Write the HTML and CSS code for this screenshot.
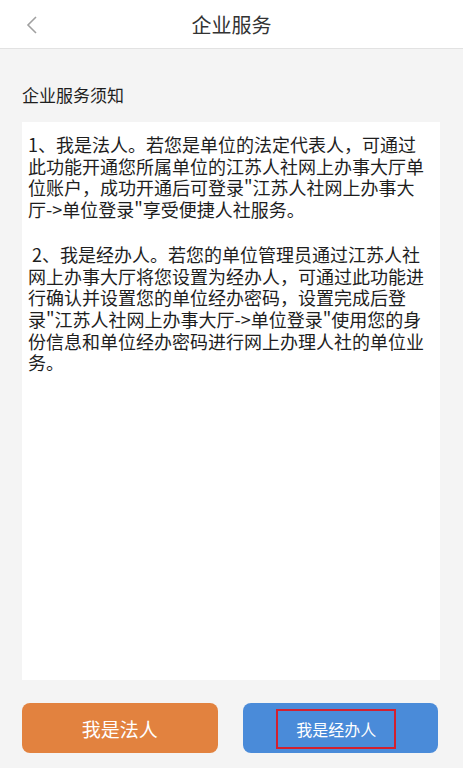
FILE: index.html
```html
<!DOCTYPE html>
<html lang="zh-CN">
<head>
    <meta charset="UTF-8">
    <meta name="viewport" content="width=device-width, initial-scale=1.0">
    <title>企业服务</title>
    <link rel="stylesheet" href="styles.css">
</head>
<body>
    <div class="header">
        <button class="back-btn">
            <svg width="12" height="18" viewBox="0 0 12 18">
                <polyline points="10,1 2,9 10,17" fill="none" stroke="#a0a0a0" stroke-width="1.6"/>
            </svg>
        </button>
        <h1>企业服务</h1>
    </div>

    <div class="section-title">企业服务须知</div>

    <div class="notice">
        <p>1、我是法人。若您是单位的法定代表人，可通过此功能开通您所属单位的江苏人社网上办事大厅单位账户，成功开通后可登录"江苏人社网上办事大厅->单位登录"享受便捷人社服务。</p>
        <p>&nbsp;2、我是经办人。若您的单位管理员通过江苏人社网上办事大厅将您设置为经办人，可通过此功能进行确认并设置您的单位经办密码，设置完成后登录"江苏人社网上办事大厅->单位登录"使用您的身份信息和单位经办密码进行网上办理人社的单位业务。</p>
    </div>

    <div class="actions">
        <button class="button legal">我是法人</button>
        <button class="button agent"><span class="highlight">我是经办人</span></button>
    </div>
</body>
</html>
```

FILE: styles.css
```css
html, body {
    height: 100%;
}

body {
    margin: 0;
    display: flex;
    flex-direction: column;
    background-color: #f4f4f4;
    font-family: "Noto Sans CJK SC", sans-serif;
    color: #1e1e1e;
}

.header {
    position: relative;
    height: 48px;
    background-color: #ffffff;
    border-bottom: 1px solid #e2e2e2;
    display: flex;
    justify-content: center;
    align-items: center;
    flex-shrink: 0;
}

.header h1 {
    margin: 0;
    font-size: 20px;
    font-weight: normal;
    color: #333;
}

.back-btn {
    position: absolute;
    left: 26px;
    top: 16px;
    padding: 0;
    border: none;
    background: none;
}

.back-btn svg {
    display: block;
}

.section-title {
    margin: 34px 22px 15px;
    font-size: 17px;
    line-height: 24px;
}

.notice {
    flex: 1;
    margin: 0 23px 0 22px;
    padding: 12px 14px 0 6px;
    background-color: #ffffff;
    font-size: 18px;
    line-height: 21.7px;
}

.notice p {
    margin: 0 0 23px;
}

.actions {
    display: flex;
    gap: 25px;
    padding: 23px 25px 15px 22px;
    flex-shrink: 0;
}

.button {
    flex: 1;
    height: 50px;
    border: none;
    border-radius: 8px;
    color: #fff;
    font-family: "Noto Sans CJK SC", sans-serif;
    display: flex;
    justify-content: center;
    align-items: center;
    padding: 0;
}

.legal {
    background-color: #e2823f;
    font-size: 19px;
}

.agent {
    background-color: #4a8bd9;
    font-size: 16px;
}

.highlight {
    display: flex;
    align-items: center;
    height: 36px;
    padding: 0 18px;
    margin-right: 8px;
    margin-top: 2px;
    border: 2px solid #d3202f;
}
```
